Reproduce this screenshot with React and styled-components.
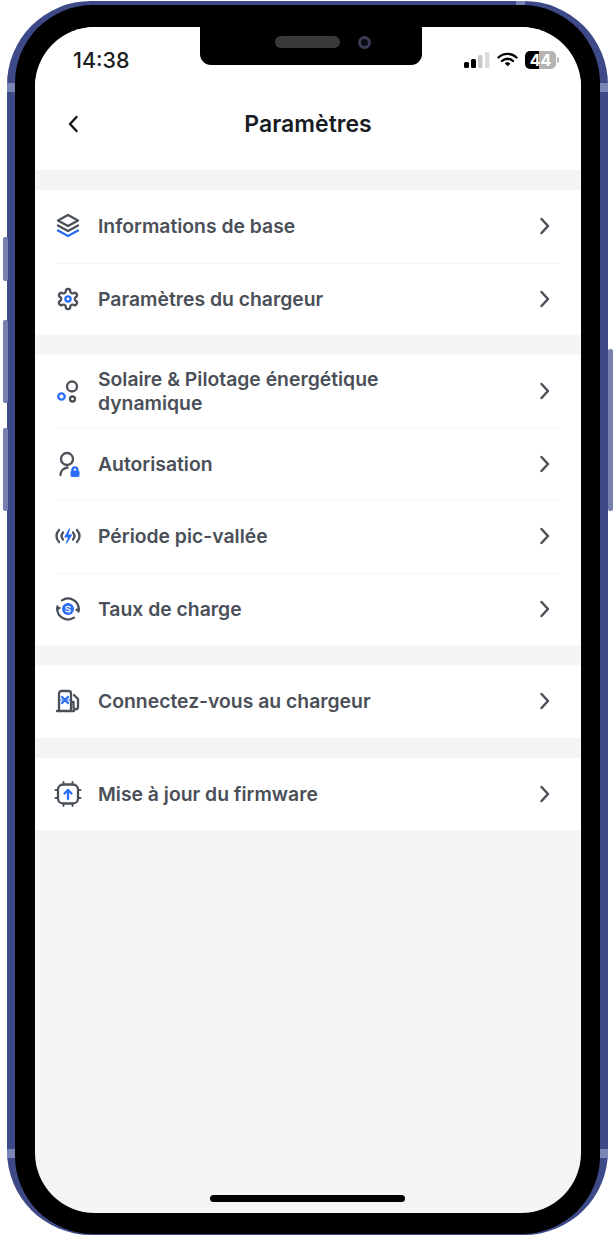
import React from 'react';
import styled, { createGlobalStyle } from 'styled-components';

const GlobalStyle = createGlobalStyle`
  html, body {
    margin: 0;
    padding: 0;
    background: #fff;
  }
  * { box-sizing: border-box; }
`;

const Page = styled.div`
  width: 615px;
  height: 1236px;
  padding: 1px 7px;
  font-family: Inter, "Noto Sans", sans-serif;
`;

const PhoneBody = styled.div`
  position: relative;
  width: 601px;
  height: 1234px;
  padding: 4px 8px 1px;
  border-radius: 84px;
  background: #3e4a88;
`;

const SideButton = styled.span`
  position: absolute;
  top: ${p => p.$top}px;
  ${p => (p.$right ? 'right: -5px;' : 'left: -4px;')}
  width: 5px;
  height: ${p => p.$height}px;
  border-radius: 2px;
  background: #7680ae;
`;

// lighter antenna breaks on the metal band
const AntennaBand = styled.span`
  position: absolute;
  top: ${p => p.$top}px;
  ${p => (p.$right ? 'right: 0;' : 'left: 0;')}
  width: 8px;
  height: 9px;
  background: #7b85b4;
`;

const TopAntennaBand = styled.span`
  position: absolute;
  top: 0;
  right: 83px;
  width: 9px;
  height: 4px;
  background: #7b85b4;
`;

const Bezel = styled.div`
  height: 100%;
  padding: 22px 19px 21px 20px;
  border-radius: 78px;
  background: #000;
`;

const Screen = styled.div`
  position: relative;
  display: flex;
  flex-direction: column;
  height: 100%;
  overflow: hidden;
  border-radius: 60px;
  background: #f5f5f5;
`;

const Notch = styled.div`
  position: absolute;
  top: 0;
  left: 165px;
  display: flex;
  align-items: center;
  width: 222px;
  height: 38px;
  padding: 0 0 8px 75px;
  border-radius: 0 0 11px 11px;
  background: #000;
`;

const Speaker = styled.span`
  width: 65px;
  height: 12px;
  border-radius: 6px;
  background: #3a3a3c;
`;

const Camera = styled.span`
  width: 13px;
  height: 13px;
  margin-left: 18px;
  border: 3px solid #3b3b58;
  border-radius: 50%;
  background: #0b0b14;
`;

const TopArea = styled.div`
  height: 143px;
  background: #fff;
`;

const StatusBar = styled.div`
  display: flex;
  align-items: center;
  justify-content: space-between;
  height: 66px;
  padding: 0 25px 0 38px;
`;

const Clock = styled.span`
  font-size: 21.5px;
  font-weight: 500;
  color: #1b1d21;
`;

const StatusIcons = styled.div`
  display: flex;
  align-items: center;
  gap: 7px;
`;

const Battery = styled.div`
  position: relative;
  display: flex;
  align-items: center;
  justify-content: center;
  width: 31px;
  height: 18px;
  border-radius: 5px;
  background: linear-gradient(90deg, #000 45%, #b4b4b4 45%);
  font-size: 16px;
  font-weight: 700;
  color: #fff;

  &::after {
    content: '';
    position: absolute;
    top: 6px;
    right: -3px;
    width: 2px;
    height: 6px;
    border-radius: 0 2px 2px 0;
    background: #b4b4b4;
  }
`;

const Header = styled.header`
  display: grid;
  grid-template-columns: 1fr auto 1fr;
  align-items: center;
  height: 62px;
  padding: 0 32px;
`;

const Title = styled.h1`
  margin: 0;
  font-size: 23px;
  font-weight: 600;
  color: #171b22;
`;

const SectionList = styled.div`
  display: flex;
  flex-direction: column;
  gap: 20px;
  padding-top: 20px;
`;

const Section = styled.section`
  background: #fff;
`;

const Row = styled.div`
  position: relative;
  display: flex;
  align-items: center;
  gap: 16px;
  height: 72.5px;
  padding: 0 30px 0 19px;

  & + &::before {
    content: '';
    position: absolute;
    top: 0;
    left: 20px;
    right: 21px;
    height: 1px;
    background: #f6f6f6;
  }
`;

const RowIcon = styled.svg`
  flex: none;
  width: 28px;
  height: 28px;
  fill: none;
  stroke: #4a4f58;
  stroke-width: 2.3;
  stroke-linecap: round;
  stroke-linejoin: round;
`;

const RowLabel = styled.span`
  flex: 1;
  max-width: 330px;
  font-size: 19.35px;
  font-weight: 600;
  line-height: 24px;
  color: #4a4f58;
`;

const Chevron = styled.svg`
  flex: none;
  width: 12px;
  height: 18px;
  margin-left: auto;
  fill: none;
  stroke: #4a4f58;
  stroke-width: 2.5;
  stroke-linecap: round;
  stroke-linejoin: round;
`;

const BackChevron = styled(Chevron)`
  margin-left: 0;
  stroke: #14181f;
`;

const HomeBar = styled.div`
  position: absolute;
  bottom: 11px;
  left: 175px;
  width: 195px;
  height: 7px;
  border-radius: 4px;
  background: #000;
`;

const BLUE = '#2a6cf6';

const LayersIcon = () => (
  <RowIcon viewBox="0 0 28 28">
    <path d="M14 3l10 5.600L14 14 4 8.600z" />
    <path d="M4 13.500l10 5.400 10-5.400" />
    <path d="M4 18.500l10 5.600 10-5.600" stroke={BLUE} />
  </RowIcon>
);

const GearIcon = () => (
  <RowIcon viewBox="0 0 28 28">
    <path
      transform="translate(2 2)"
      d="M12.220 2h-.44a2 2 0 0 0-2 2v.18a2 2 0 0 1-1 1.730l-.43.25a2 2 0 0 1-2 0l-.15-.08a2 2 0 0 0-2.730.73l-.22.38a2 2 0 0 0 .73 2.730l.15.1a2 2 0 0 1 1 1.720v.51a2 2 0 0 1-1 1.740l-.15.09a2 2 0 0 0-.73 2.730l.22.38a2 2 0 0 0 2.730.73l.15-.08a2 2 0 0 1 2 0l.43.25a2 2 0 0 1 1 1.730V20a2 2 0 0 0 2 2h.44a2 2 0 0 0 2-2v-.18a2 2 0 0 1 1-1.730l.43-.25a2 2 0 0 1 2 0l.15.08a2 2 0 0 0 2.730-.73l.22-.39a2 2 0 0 0-.73-2.730l-.15-.08a2 2 0 0 1-1-1.740v-.5a2 2 0 0 1 1-1.740l.15-.09a2 2 0 0 0 .73-2.730l-.22-.38a2 2 0 0 0-2.730-.73l-.15.08a2 2 0 0 1-2 0l-.43-.25a2 2 0 0 1-1-1.730V4a2 2 0 0 0-2-2z"
    />
    <circle cx="14" cy="14" r="2.600" stroke={BLUE} />
  </RowIcon>
);

const BubblesIcon = () => (
  <RowIcon viewBox="0 0 28 28">
    <circle cx="18" cy="9.500" r="5" />
    <circle cx="7.500" cy="19.500" r="3.200" stroke={BLUE} />
    <circle cx="18.500" cy="22" r="2.500" />
  </RowIcon>
);

const UserLockIcon = () => (
  <RowIcon viewBox="0 0 28 28">
    <circle cx="13" cy="9" r="6" />
    <path d="M6.500 25c0-4 3-7 7-7.500" />
    <path d="M18.500 21.500v-1.600a2.500 2.500 0 0 1 5 0v1.600" stroke={BLUE} />
    <rect x="17" y="21" width="8" height="5.600" rx="1" fill={BLUE} stroke={BLUE} strokeWidth="1" />
  </RowIcon>
);

const PeakIcon = () => (
  <RowIcon viewBox="0 0 28 28">
    <path d="M5 8c-3.400 4-3.400 8 0 12" />
    <path d="M9 10.500c-2 2.400-2 4.600 0 7" />
    <path d="M19 10.500c2 2.400 2 4.600 0 7" />
    <path d="M23 8c3.400 4 3.400 8 0 12" />
    <path d="M15.500 7L11 15h4l-2.500 6 5-8h-4z" fill={BLUE} stroke={BLUE} strokeWidth="1.200" />
  </RowIcon>
);

const RateIcon = () => (
  <RowIcon viewBox="0 0 28 28">
    <path d="M8 5.400A10.800 10.800 0 0 1 24.800 14" />
    <path d="M20 22.600A10.800 10.800 0 0 1 3.200 14" />
    <path d="M3.500 11.400L3.200 14l2.300-1" />
    <path d="M24.500 16.600l.3-2.600-2.300 1" />
    <circle cx="14" cy="14" r="6" fill={BLUE} stroke="none" />
    <path d="M16.200 12.300c-.4-.7-1.200-1-2.200-1-1.200 0-2.100.5-2.100 1.400 0 2 4.400.7 4.400 2.700 0 .9-1 1.400-2.300 1.400-1 0-1.900-.3-2.300-1" stroke="#fff" strokeWidth="1.300" />
  </RowIcon>
);

const PumpIcon = () => (
  <RowIcon viewBox="0 0 28 28">
    <path d="M3 24h17" />
    <path d="M5 24V6.500A2.500 2.500 0 0 1 7.500 4h7A2.500 2.500 0 0 1 17 6.500V24" />
    <path d="M17 15h2.500v5a2.200 2.200 0 0 0 4.500 0v-8l-4-4" />
    <path d="M8 10l6 6M14 10l-6 6" stroke={BLUE} />
    <path d="M6 13h10" stroke={BLUE} strokeWidth="1" />
  </RowIcon>
);

const ChipIcon = () => (
  <RowIcon viewBox="0 0 28 28">
    <rect x="4" y="4.500" width="20" height="19" rx="5" />
    <path d="M9.500 2v2.500M18.500 2v2.500M9.500 23.500V26M18.500 23.500V26M1.500 10H4M1.500 18H4M24 10h2.500M24 18h2.500" strokeWidth="1.800" />
    <path d="M14 19v-9M10.500 13.500L14 10l3.500 3.500" stroke={BLUE} />
  </RowIcon>
);

const sections = [
  [
    { label: 'Informations de base', Icon: LayersIcon },
    { label: 'Paramètres du chargeur', Icon: GearIcon },
  ],
  [
    { label: 'Solaire & Pilotage énergétique dynamique', Icon: BubblesIcon },
    { label: 'Autorisation', Icon: UserLockIcon },
    { label: 'Période pic-vallée', Icon: PeakIcon },
    { label: 'Taux de charge', Icon: RateIcon },
  ],
  [{ label: 'Connectez-vous au chargeur', Icon: PumpIcon }],
  [{ label: 'Mise à jour du firmware', Icon: ChipIcon }],
];

function SignalIcon() {
  return (
    <svg width="26" height="18" viewBox="0 0 26 18">
      <rect x="0" y="11" width="5" height="6" rx="1.500" fill="#000" />
      <rect x="7" y="8" width="5" height="9" rx="1.500" fill="#000" />
      <rect x="14" y="4" width="4.500" height="13" rx="1.500" fill="#c9c9c9" />
      <rect x="21" y="1" width="4.500" height="16" rx="1.500" fill="#dcdcdc" />
    </svg>
  );
}

function WifiIcon() {
  return (
    <svg width="21" height="16" viewBox="0 0 21 16" fill="none" stroke="#000" strokeWidth="2.400" strokeLinecap="round">
      <path d="M1.500 5.500a13 13 0 0 1 18 0" />
      <path d="M5 9a8 8 0 0 1 11 0" />
      <path d="M10.500 13.500l-2.200-2a3.300 3.300 0 0 1 4.400 0z" fill="#000" strokeWidth="1" strokeLinejoin="round" />
    </svg>
  );
}

export default function App() {
  return (
    <Page>
      <GlobalStyle />
      <PhoneBody>
        <SideButton $top={236} $height={44} />
        <SideButton $top={319} $height={83} />
        <SideButton $top={427} $height={83} />
        <SideButton $right $top={348} $height={162} />
        <AntennaBand $top={82} />
        <AntennaBand $right $top={82} />
        <AntennaBand $top={1148} />
        <AntennaBand $right $top={1148} />
        <TopAntennaBand />
        <Bezel>
          <Screen>
            <Notch>
              <Speaker />
              <Camera />
            </Notch>
            <TopArea>
              <StatusBar>
                <Clock>14:38</Clock>
                <StatusIcons>
                  <SignalIcon />
                  <WifiIcon />
                  <Battery>44</Battery>
                </StatusIcons>
              </StatusBar>
              <Header>
                <BackChevron viewBox="0 0 12 18">
                  <path d="M9.500 2L3 9l6.500 7" />
                </BackChevron>
                <Title>Paramètres</Title>
              </Header>
            </TopArea>
            <SectionList>
              {sections.map((rows, i) => (
                <Section key={i}>
                  {rows.map(({ label, Icon }) => (
                    <Row key={label}>
                      <Icon />
                      <RowLabel>{label}</RowLabel>
                      <Chevron viewBox="0 0 12 18">
                        <path d="M2.500 2L9 9l-6.500 7" />
                      </Chevron>
                    </Row>
                  ))}
                </Section>
              ))}
            </SectionList>
            <HomeBar />
          </Screen>
        </Bezel>
      </PhoneBody>
    </Page>
  );
}
